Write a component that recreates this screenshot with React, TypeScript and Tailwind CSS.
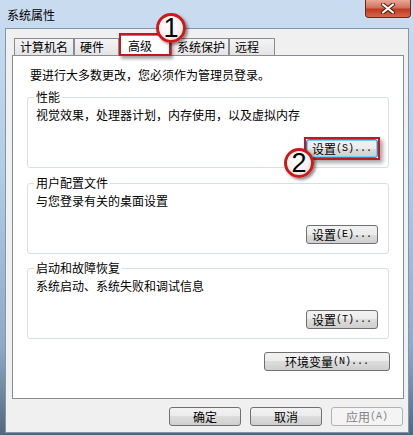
import type { ReactNode } from 'react'

const cjk = "font-['Noto_Sans_CJK_SC','Liberation_Sans',sans-serif]"

function Hint({ children }: { children: ReactNode }) {
  return <span className="font-['Liberation_Mono',monospace] text-[10px]">{children}</span>
}

type BtnProps = { label: string; hint?: string; width?: string; disabled?: boolean; hot?: boolean }

function Btn({ label, hint, width = 'w-[72px]', disabled, hot }: BtnProps) {
  const look = disabled
    ? 'border-[#adb2b5] bg-[#f4f4f4] text-[#838383]'
    : hot
      ? 'border-[#3c7fb1] shadow-[inset_0_0_0_1px_#6fd3f5] bg-[linear-gradient(#f2f2f2,#ebebeb_50%,#dddddd_50%,#cfcfcf)] text-black'
      : 'border-[#707070] bg-[linear-gradient(#f2f2f2,#ebebeb_50%,#dddddd_50%,#cfcfcf)] text-black'
  return (
    <div className={`${width} h-[19px] rounded-[3px] border ${look} flex items-center justify-center text-[12px] leading-[14px]`}>
      <span>{label}</span>
      {hint && <Hint>{hint}</Hint>}
    </div>
  )
}

function Badge({ n, className }: { n: string; className: string }) {
  return (
    <div
      className={`absolute z-20 w-[30px] h-[30px] rounded-full border-[3px] border-[#d01818] bg-[radial-gradient(circle_at_40%_35%,#ffffff,#f6f0f0_60%,#dccaca)] shadow-[2px_2px_3px_rgba(0,0,0,0.45)] flex items-center justify-center font-['Liberation_Sans',sans-serif] text-[27px] leading-none text-black ${className}`}>
      {n}
    </div>
  )
}

type GroupProps = { title: string; text: string; btn: string; hint: string; hot?: boolean; className: string }

function Group({ title, text, btn, hint, hot, className }: GroupProps) {
  return (
    <fieldset className={`mx-[14px] border border-[#d5dfe5] rounded-[3px] px-[8px] pb-[9px] flex flex-col ${className}`}>
      <legend className="px-[2px] -ml-[2px] leading-[14px] text-[12px]">{title}</legend>
      <p className="mt-[4px] leading-[14px] text-[12px]">{text}</p>
      {hot ? (
        <div className="relative mt-[15px] -mb-[2px] self-end border-2 border-[#c8161d] shadow-[3px_3px_4px_rgba(0,0,0,0.35)]">
          <Btn label={btn} hint={hint} hot />
          <Badge n="2" className="-left-[22px] top-[9px]" />
        </div>
      ) : (
        <div className="mt-[17px] mr-[2px] self-end">
          <Btn label={btn} hint={hint} />
        </div>
      )}
    </fieldset>
  )
}

const tabs = [
  { name: '计算机名', w: 'w-[60px]' },
  { name: '硬件', w: 'w-[45px]' },
  { name: '高级', w: 'w-[52px]', active: true },
  { name: '系统保护', w: 'w-[58px]' },
  { name: '远程', w: 'w-[46px]' },
]

export default function App() {
  return (
    <div className={`w-[413px] h-[435px] overflow-hidden flex flex-col bg-[linear-gradient(#cadcf0,#b4cbe5_40%,#8fa8c6_80%,#54667c)] ${cjk}`}>
      {/* Title bar */}
      <div className="h-[28px] flex items-start justify-between">
        <span className="pl-[7px] pt-[7px] leading-[16px] text-[12px] text-black">系统属性</span>
        <div className="mr-[2px] w-[46px] h-[18px] rounded-b-[4px] border border-t-0 border-[#6e2418] bg-[linear-gradient(#e9a898,#d2705c_45%,#c0391f_55%,#d8674c)] flex items-center justify-center">
          <svg width="16" height="11" viewBox="0 0 16 11">
            <path d="M3 1.5 L13 9.5 M13 1.5 L3 9.5" stroke="#4a1a12" strokeWidth="4" strokeLinecap="round" />
            <path d="M3 1.5 L13 9.5 M13 1.5 L3 9.5" stroke="#ffffff" strokeWidth="2.2" strokeLinecap="round" />
          </svg>
        </div>
      </div>

      {/* Dialog body */}
      <div className="ml-[5px] w-[404px] h-[405px] shrink-0 border border-[#8296ae] bg-[#f0f0f0]">
        <div className="ml-[6px] w-[392px]">
          {/* Tabs */}
          <div className="flex items-end h-[26px] pl-[2px]">
            {tabs.map((t) =>
              t.active ? (
                <div
                  key={t.name}
                  className={`${t.w} relative z-10 h-[21px] -mb-[1px] border border-b-0 border-[#898c95] bg-white pl-[8px] pt-[3px] leading-[14px] text-[12px]`}>
                  {t.name}
                  <div className="absolute -left-[1px] -right-[1px] -top-[3px] bottom-0 border-2 border-[#c8161d] shadow-[2px_3px_3px_rgba(0,0,0,0.35)]" />
                  <Badge n="1" className="left-[36px] -top-[23px]" />
                </div>
              ) : (
                <div
                  key={t.name}
                  className={`${t.w} h-[17px] border border-b-0 border-[#898c95] bg-[linear-gradient(#f4f4f4,#e4e4e4)] pl-[5px] pt-[1px] leading-[14px] text-[12px]`}>
                  {t.name}
                </div>
              )
            )}
          </div>

          {/* Panel */}
          <div className="h-[344px] border border-[#898c95] bg-white pt-[12px] flex flex-col text-black">
            <p className="pl-[17px] leading-[14px] text-[12px]">要进行大多数更改，您必须作为管理员登录。</p>
            <Group
              className="mt-[8px]"
              title="性能"
              text="视觉效果，处理器计划，内存使用，以及虚拟内存"
              btn="设置"
              hint="(S)..."
              hot
            />
            <Group className="mt-[8px]" title="用户配置文件" text="与您登录有关的桌面设置" btn="设置" hint="(E)..." />
            <Group className="mt-[7px]" title="启动和故障恢复" text="系统启动、系统失败和调试信息" btn="设置" hint="(T)..." />
            <div className="mt-[13px] mr-[13px] self-end">
              <Btn label="环境变量" hint="(N)..." width="w-[126px]" />
            </div>
          </div>

          {/* Dialog buttons */}
          <div className="mt-[8px] pr-[1px] flex justify-end gap-[9px]">
            <Btn label="确定" />
            <Btn label="取消" />
            <Btn label="应用" hint="(A)" disabled />
          </div>
        </div>
      </div>
    </div>
  )
}
